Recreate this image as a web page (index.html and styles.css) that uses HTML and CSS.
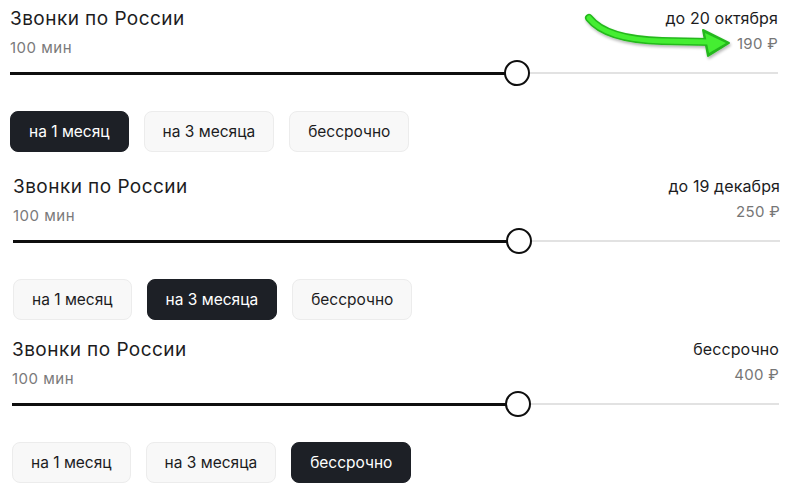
FILE: index.html
```html
<!DOCTYPE html>
<html lang="ru">
<head>
<meta charset="utf-8">
<link rel="stylesheet" href="styles.css">
</head>
<body>
<div class="page">
  <section class="plan plan-a">
    <div class="head">
      <div class="left">
        <div class="title">Звонки по России</div>
        <div class="sub">100 мин</div>
      </div>
      <div class="right">
        <div class="date">до 20 октября</div>
        <div class="price">190 ₽</div>
      </div>
    </div>
    <div class="slider">
      <div class="track"></div>
      <div class="fill" style="width:66%"></div>
      <div class="knob" style="left:66%"></div>
    </div>
    <div class="options">
      <button class="opt active">на 1 месяц</button>
      <button class="opt">на 3 месяца</button>
      <button class="opt">бессрочно</button>
    </div>
  </section>

  <section class="plan plan-b">
    <div class="head">
      <div class="left">
        <div class="title">Звонки по России</div>
        <div class="sub">100 мин</div>
      </div>
      <div class="right">
        <div class="date">до 19 декабря</div>
        <div class="price">250 ₽</div>
      </div>
    </div>
    <div class="slider">
      <div class="track"></div>
      <div class="fill" style="width:66%"></div>
      <div class="knob" style="left:66%"></div>
    </div>
    <div class="options">
      <button class="opt">на 1 месяц</button>
      <button class="opt active">на 3 месяца</button>
      <button class="opt">бессрочно</button>
    </div>
  </section>

  <section class="plan plan-c">
    <div class="head">
      <div class="left">
        <div class="title">Звонки по России</div>
        <div class="sub">100 мин</div>
      </div>
      <div class="right">
        <div class="date">бессрочно</div>
        <div class="price">400 ₽</div>
      </div>
    </div>
    <div class="slider">
      <div class="track"></div>
      <div class="fill" style="width:66%"></div>
      <div class="knob" style="left:66%"></div>
    </div>
    <div class="options">
      <button class="opt">на 1 месяц</button>
      <button class="opt">на 3 месяца</button>
      <button class="opt active">бессрочно</button>
    </div>
  </section>

  <svg class="arrow" width="800" height="80" viewBox="0 0 800 80">
    <defs>
      <filter id="sh" x="-10%" y="-30%" width="120%" height="160%">
        <feGaussianBlur in="SourceAlpha" stdDeviation="1.5"/>
        <feOffset dx="1" dy="2" result="b"/>
        <feComponentTransfer><feFuncA type="linear" slope="0.3"/></feComponentTransfer>
        <feMerge><feMergeNode/><feMergeNode in="SourceGraphic"/></feMerge>
      </filter>
    </defs>
    <g filter="url(#sh)">
      <path d="M589 18 C 600 32, 622 40, 662 41 L 710 42" fill="none" stroke="#25b81e" stroke-width="8" stroke-linecap="round"/>
      <polygon points="729,43 703,30 708,56" fill="#25b81e" stroke="#25b81e" stroke-width="2" stroke-linejoin="round"/>
      <path d="M589 18 C 600 32, 622 40, 662 41 L 710 42" fill="none" stroke="#44ee32" stroke-width="5" stroke-linecap="round"/>
      <polygon points="726,43 705,33 709,53" fill="#44ee32"/>
    </g>
  </svg>
</div>
</body>
</html>
```
FILE: styles.css
```css
* { box-sizing: border-box; }
html, body { margin: 0; padding: 0; background: #fff; }
body {
  font-family: Inter, "Noto Sans", "Liberation Sans", sans-serif;
  color: #1c1c1e;
  width: 800px;
  height: 498px;
  overflow: hidden;
}
.page { position: relative; padding-top: 7px; }
.plan { display: flex; flex-direction: column; }
.plan-a { padding-left: 10px; padding-right: 22px; }
.plan-b { padding-left: 13px; padding-right: 20px; margin-top: 23px; }
.plan-c { padding-left: 12px; padding-right: 21px; margin-top: 18px; }

.head { display: flex; justify-content: space-between; align-items: flex-start; }
.left, .right { display: flex; flex-direction: column; }
.right { align-items: flex-end; }
.title { font-size: 19px; line-height: 23px; letter-spacing: 0.45px; }
.sub { font-size: 15px; line-height: 18px; color: #7a7a7a; margin-top: 9px; letter-spacing: 0.5px; }
.date { font-size: 16px; line-height: 23px; letter-spacing: 0.1px; }
.price { font-size: 15px; line-height: 18px; color: #767676; margin-top: 5px; letter-spacing: 0.3px; }

.slider { position: relative; height: 28px; margin-top: 2px; }
.track { position: absolute; left: 0; right: 0; top: 13px; height: 2px; background: #e2e2e2; }
.fill { position: absolute; left: 0; top: 12.5px; height: 3px; background: #0e0e0e; }
.knob {
  position: absolute; top: 1px; width: 26px; height: 26px; margin-left: -13px;
  border-radius: 50%; border: 2.5px solid #0e0e0e; background: #fff;
}

.options { display: flex; gap: 15px; margin-top: 24px; }
.opt {
  font-family: inherit;
  font-size: 15.5px;
  height: 41px;
  padding: 0 18px;
  border-radius: 8px;
  border: 1px solid #ececec;
  background: #f8f8f8;
  color: #1c1c1e;
}
.opt.active { background: #1d2026; border-color: #1d2026; color: #fff; }

.arrow { position: absolute; left: 0; top: 0; pointer-events: none; }
```
